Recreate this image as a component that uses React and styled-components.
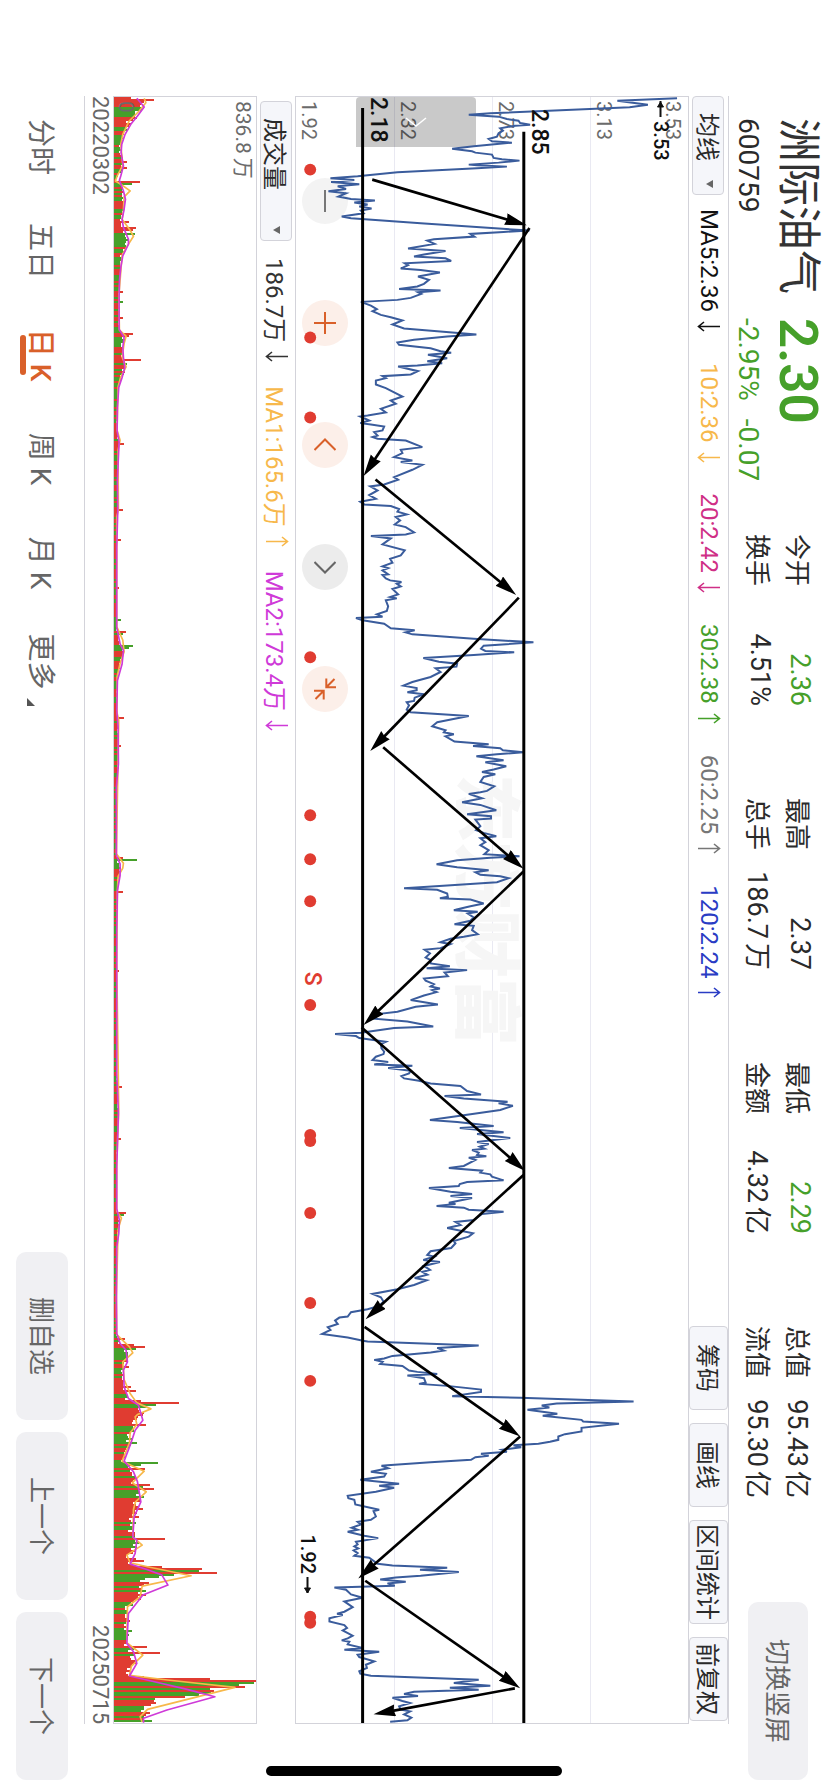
import React from 'react'
import styled, { createGlobalStyle } from 'styled-components'


const RED = '#e03c31'
const GREEN = '#46a02a'
const ORANGE = '#f7b84b'
const PURPLE = '#cf3ad8'


const GlobalStyle = createGlobalStyle`
  body {
    margin: 0;
    background: #fff;
  }

  * {
    box-sizing: border-box;
  }

  button {
    border: 0;
    padding: 0;
    background: none;
    font: inherit;
    color: inherit;
    white-space: nowrap;
  }
`

const Page = styled.div`
  width: 100vw;
  height: 100vh;
  overflow: hidden;
`

// the phone is held sideways, so the whole page is turned by a quarter
const Stage = styled.main`
  width: 100vh;
  height: 100vw;
  margin-left: 100vw;
  transform: rotate(90deg);
  transform-origin: top left;
  position: relative;
  display: flex;
  flex-direction: column;
  font-family: Roboto, 'Noto Sans CJK SC', sans-serif;
  color: #2a2a2a;
`

/* ---------- header ---------- */

const Header = styled.header`
  height: 99px;
  display: grid;
  grid-template-columns: 416px 1fr 178px;
  padding: 0 12px 0 118px;
`

const Identity = styled.div`
  display: grid;
  grid-template-columns: 200px 1fr;
  grid-template-rows: 60px 39px;
  align-items: center;
`

const Name = styled.h1`
  margin: 0;
  font-size: 44px;
  line-height: 60px;
  font-weight: 400;
  color: #333;
`

const Price = styled.strong`
  font-size: 53px;
  line-height: 60px;
  font-weight: 600;
  color: ${GREEN};
`

const Code = styled.span`
  font-size: 28px;
`

const Change = styled.span`
  display: flex;
  gap: 18px;
  font-size: 28px;
  color: ${GREEN};
`

const Stats = styled.dl`
  margin: 0;
  padding: 8px 104px 0 0;
  display: grid;
  grid-template-columns: repeat(4, 1fr);
  grid-auto-rows: 40px;
  column-gap: 92px;
`

const Stat = styled.div`
  display: flex;
  justify-content: space-between;
  align-items: center;
  font-size: 26px;
  white-space: nowrap;

  dd {
    margin: 0;
    font-size: 27px;
    color: ${p => p.$color || '#2a2a2a'};
  }
`

const Unit = styled.span`
  margin-left: 4px;
`

const GreyButton = styled.button`
  height: ${p => p.$height || '52px'};
  width: ${p => p.$width || '168px'};
  margin-top: ${p => p.$top || '0'};
  padding-bottom: 4px;
  border-radius: 10px;
  background: #f0f0f3;
  color: #666;
  font-size: 26px;
`

/* ---------- board ---------- */

const Board = styled.section`
  flex: 1;
  min-height: 0;
  margin: 0 68px 0 96px;
  display: flex;
  flex-direction: column;
`

const Toolbar = styled.div`
  height: ${p => p.$height};
  border-top: ${p => (p.$line ? '1px solid #d3d3da' : '0')};
  padding-left: ${p => p.$left || '0'};
  display: flex;
  align-items: center;
  font-size: 24px;
`

const Picker = styled.button`
  height: 32px;
  width: ${p => p.$width};
  padding: 0 6px 2px 16px;
  display: flex;
  align-items: center;
  justify-content: space-between;
  border: 1px solid #d3d3da;
  border-radius: 4px;
  background: #f5f6fa;

  &::after {
    content: '';
    border: 4px solid transparent;
    border-top: 7px solid #666;
    border-bottom: 0;
  }
`

const Averages = styled.div`
  display: flex;
  gap: ${p => p.$gap};
  margin-left: ${p => p.$left};
  padding-bottom: 2px;
`

const Average = styled.span`
  display: flex;
  align-items: center;
  gap: 9px;
  color: ${p => p.$color};
  white-space: nowrap;
`

const Tools = styled.div`
  margin-left: auto;
  padding-right: 3px;
  display: flex;
  gap: 13px;
`

const Tool = styled.button`
  height: 39px;
  min-width: 84px;
  padding: 0 3px 2px;
  border: 1px solid #d3d3da;
  border-radius: 4px;
  background: #f5f6fa;
`

const Panel = styled.div`
  flex: ${p => p.$share} 1 0;
  min-height: 0;
  position: relative;
  border: 1px solid #d3d3da;
`

const Layer = styled.svg`
  position: absolute;
  inset: 0;
  width: 100%;
  height: 100%;
`

const Watermark = styled.div`
  position: absolute;
  inset: 0;
  display: flex;
  align-items: center;
  justify-content: center;
  font-size: 68px;
  font-weight: 900;
  color: #f6f6f6;
`

const Scale = styled.div`
  position: absolute;
  inset: 0;
  display: grid;
  grid-template-rows: repeat(4, 1fr);
`

const ScaleRow = styled.div`
  display: flex;
  flex-direction: column;
  justify-content: space-between;
  padding: 3px 4px 1px;
  border-bottom: 1px solid #e9e9f2;
  font-size: 20px;
  line-height: 24px;
  color: #6b6b6b;

  &:last-child {
    border-bottom: 0;
  }

  span:only-child {
    margin-top: auto;
  }
`

const Mark = styled.span`
  position: absolute;
  left: ${p => p.$x};
  top: ${p => p.$y};
  transform: translateY(-50%);
  font-size: ${p => p.$size || '23px'};
  line-height: 24px;
  font-weight: 500;
  color: ${p => p.$color || '#111'};
  white-space: nowrap;
  display: flex;
  align-items: center;
  gap: 3px;
`

const Handle = styled.button`
  position: absolute;
  left: 0;
  top: 54%;
  width: 50px;
  height: 120px;
  border-radius: 4px 0 0 4px;
  background: rgba(0, 0, 0, 0.21);
  display: grid;
  place-items: center;
`

const Controls = styled.div`
  position: absolute;
  left: 81px;
  bottom: 6px;
  display: flex;
  gap: 76px;
`

const Round = styled.button`
  width: 46px;
  height: 46px;
  border-radius: 50%;
  display: grid;
  place-items: center;
  background: ${p => p.$bg};
  color: ${p => p.$color};
`

const VolumeScale = styled.div`
  position: absolute;
  inset: 0;
  padding: 1px 4px 0;
  display: flex;
  flex-direction: column;
  justify-content: space-between;
  font-size: 21px;
  line-height: 24px;
  color: #6b6b6b;
`

const Dates = styled.div`
  height: 29px;
  display: flex;
  justify-content: space-between;
  border-bottom: 1px solid #d3d3da;
  font-size: 22px;
  line-height: 26px;
  color: #666;
`

/* ---------- footer ---------- */

const Footer = styled.footer`
  height: 84px;
  padding: 0 12px 0 95px;
  display: flex;
  align-items: center;
`

const Tabs = styled.nav`
  display: flex;
`

const Tab = styled.button`
  width: 104px;
  height: 84px;
  padding-bottom: 2px;
  position: relative;
  font-size: 28px;
  font-weight: ${p => (p.$active ? 500 : 400)};
  color: ${p => (p.$active ? '#d9602a' : '#666')};

  &:last-child {
    width: 93px;
  }

  &::after {
    content: '';
    display: ${p => (p.$active ? 'block' : 'none')};
    position: absolute;
    left: 32px;
    bottom: 20px;
    width: 40px;
    height: 6px;
    border-radius: 3px;
    background: #d9602a;
  }
`

const Corner = styled.svg`
  position: absolute;
  right: 2px;
  bottom: 27px;
`

const Actions = styled.div`
  margin-left: auto;
  display: flex;
  gap: 12px;
`

const HomeBar = styled.div`
  position: absolute;
  right: 16px;
  top: calc(50% - 148px);
  width: 10px;
  height: 296px;
  border-radius: 5px;
  background: #000;
`

/* ---------- data ---------- */

const stats = [
  { label: '今开', value: '2.36', color: GREEN },
  { label: '最高', value: '2.37' },
  { label: '最低', value: '2.29', color: GREEN },
  { label: '总值', value: '95.43', unit: '亿' },
  { label: '换手', value: '4.51%' },
  { label: '总手', value: '186.7', unit: '万' },
  { label: '金额', value: '4.32', unit: '亿' },
  { label: '流值', value: '95.30', unit: '亿' },
]

const averages = [
  ['MA5:2.36', 'down', '#111'],
  ['10:2.36', 'down', ORANGE],
  ['20:2.42', 'down', '#cf2f86'],
  ['30:2.38', 'up', GREEN],
  ['60:2.25', 'up', '#777'],
  ['120:2.24', 'up', '#2a3cc4'],
]

const volumeAverages = [
  ['186.7万', 'down', '#333'],
  ['MA1:165.6万', 'up', ORANGE],
  ['MA2:173.4万', 'down', PURPLE],
]

// [price height, time], one block per stretch of the time axis
const blocks = [
  [0, `1043,23 863,30 955,42 900,50 780,55 480,68 415,72 505,78 530,85 565,90 570,97 600,102 555,105 510,113 518,120
    505,128 500,138 475,145 485,152 545,156 430,167 365,174 425,182 435,186 485,192 490,202 515,206 568,210 505,216
    415,222 440,224 530,228 440,233 200,245 80,257 -2,263 70,268 0,274 85,281 20,287 45,295 -8,302 45,308 22,318
    60,325 132,330 70,336 110,342 85,348 122,354 90,360 98,368 32,378 60,383 270,398 598,420 520,424 420,430 432,438
    310,446 290,450 312,460 232,474 345,481 280,492 250,498 345,503 362,511 222,518 232,524 210,534 270,538 328,546
    262,558 295,568 280,580 260,588 205,595 330,600 262,605 272,610 240,622 200,628 90,634 120,645 138,656 125,662
    150,673 180,680 215,690 185,702 220,714 320,722 438,732 350,738 250,748 200,756 205,763 300,773 330,782 362,787
    292,793 350,803 290,812 335,818 260,825 202,828 262,842 240,852 155,857 165,863 135,870 135,882 165,893 215,918
    180,930 195,940 150,955 165,966 110,975 88,978 115,990 88,998 120,1002 160,1008 155,1020 130,1025 140,1035
    125,1040 140,1045 225,1050 275,1070 210,1078 215,1088 190,1100 245,1110 210,1115 275,1123 245,1138 190,1160
    202,1168 160,1182 118,1188 140,1200 115,1214 135,1225`],
  [1230, `88,4 100,12 180,17 205,26 200,34 228,42 195,50 208,60 192,72 225,80 250,96 225,102 120,107 180,114 155,132
    222,150 210,165 178,175 185,187 155,198 172,203 155,210 172,222 155,224 165,234 178,240 212,245 198,250 210,258
    185,266 202,282 178,290 198,294 165,300 172,318 168,332 138,342 155,349 75,353 95,360 160,370 180,384 252,390
    225,396 245,402 430,415 610,426 460,436 452,445 465,452 552,456 430,464 278,473 325,484 380,490 378,499 315,504
    330,515 300,530 245,545 218,556 258,563 258,570 230,576 280,582 252,592 250,602 228,606 235,615 228,628 240,636
    415,647 365,657 320,666 305,678 345,690 340,696 370,702 345,708 372,724 475,732 428,737 510,744 518,750 580,756
    500,762 438,768 520,780 465,786 528,798 490,808 455,815 495,822 460,830 450,845 492,858 470,872 450,876 415,881
    455,894 395,906 450,914 498,930 410,942 482,948 482,955 435,958 450,978 437,990 460,998 498,1008 450,1014
    465,1026 450,1035 475,1050 462,1062 568,1068 480,1073 380,1080 318,1092 380,1101 475,1110 435,1116 450,1124
    510,1128 535,1134 500,1146 350,1156 220,1164 320,1169 350,1180 352,1190 328,1194 420,1198 460,1210 420,1218
    375,1229`],
  [2460, `370,0 442,5 412,10 430,22 420,32 372,42 430,47 425,60 442,72 400,80 360,86 330,96 360,102 330,114 282,119
    298,130 285,142 300,150 300,160 358,168 288,174 410,180 342,187 352,198 280,205 285,212 310,222 300,229 328,235
    305,240 318,246 280,256 240,270 322,283 255,290 200,305 140,312 130,326 230,334 308,349 190,354 90,368 12,372
    75,378 85,384 165,395 150,402 152,415 160,425 158,432 135,440 125,450 172,456 130,463 245,467 172,474 240,482
    235,490 212,498 220,505 265,512 300,520 390,528 410,543 452,553 342,558 400,565 532,575 505,580 548,587 510,600
    410,614 298,630 380,636 490,648 388,654 520,667 440,672 540,684 440,696 475,702 448,710 462,716 425,720 445,728
    440,735 468,739 415,743 435,750 400,768 355,774 455,782 450,788 480,793 485,800 520,811 410,816 388,822 385,828
    295,834 360,845 425,852 360,858 425,864 355,878 375,882 318,888 400,893 415,899 520,905 455,912 430,930 375,936
    390,945 350,954 428,970 415,980 370,993 375,1000 362,1014 300,1024 290,1035 310,1040 278,1050 328,1056 280,1068
    298,1080 275,1086 290,1094 252,1104 288,1111 250,1125 200,1138 125,1152 150,1162 158,1175 145,1188 110,1198
    60,1207 50,1220 25,1223 12,1232 20,1242 -10,1252 -2,1260 -27,1272 50,1283 100,1293`],
  [3690, `110,65 445,77 320,84 340,92 300,98 185,108 160,116 130,120 155,126 148,132 215,138 235,152 260,156 320,162
    230,167 280,175 285,188 265,192 350,198 452,209 452,216 365,229 570,234 912,245 680,251 635,257 658,263 592,270
    682,282 638,288 755,300 760,305 868,312 755,324 755,335 705,343 685,350 685,360 660,366 625,372 550,376 573,382
    515,390 530,396 452,402 475,408 435,412 422,420 300,427 170,436 152,438 172,445 120,456 165,462 160,470 88,480
    205,492 145,498 190,504 135,516 50,528 52,535 70,540 73,554 145,570 128,574 135,590 120,600 80,606 90,614 62,624
    80,630 50,636 100,648 142,655 75,666 80,674 70,680 82,686 68,692 80,700 70,708 115,714 140,732 185,737 350,744
    268,750 385,757 270,768 195,773 148,779 225,786 170,791 192,798 10,803 45,810 60,824 95,834 40,845 65,862 40,876
    18,882 35,886 -5,896 -5,905 40,916 48,925 35,932 65,948 50,956 32,962 55,966 50,974 95,985 40,990 145,996 80,1005
    85,1012 130,1025 105,1035 108,1045 85,1055 88,1062 120,1068 445,1080 370,1090 480,1098 358,1104 445,1110 250,1116
    220,1123 262,1129 185,1134 215,1144 238,1150 205,1160 210,1170 238,1175 220,1184 242,1194 230,1202 178,1206`],
]

const toX = t => t - 19
const toY = p => 1076 - p

const priceLine = blocks
  .flatMap(([start, text]) => text.trim().split(/\s+/).map(pair => {
    const [p, t] = pair.split(',').map(Number)
    return `${toX(t + start)},${toY(p)}`
  }))
  .join(' ')

// from price, from time, to price, to time
const arrows = [
  [124, 267, 590, 404], [598, 412, 98, 1157], [134, 1167, 558, 1514], [566, 1522, 118, 1982],
  [157, 1971, 580, 2336], [580, 2344, 98, 2805], [92, 2812, 585, 3243], [580, 3255, 104, 3688],
  [101, 3711, 570, 4040], [570, 4040, 82, 4466], [103, 4473, 570, 4796], [554, 4796, 128, 4874],
]

const dots = [237, 741, 981, 1701, 2175, 2307, 2433, 2745, 3135, 3153, 3369, 3639, 3873, 4581, 4599]

const ma1 = [
  [4, 90], [17, 95], [42, 75], [72, 45], [112, 26], [142, 20], [205, 26], [235, 10], [252, 4], [262, 20], [282, 48],
  [300, 30], [340, 28], [367, 24], [400, 48], [418, 58], [450, 38], [475, 24], [600, 14], [700, 16], [718, 36],
  [740, 30], [780, 24], [810, 36], [840, 20], [870, 12], [1000, 9], [1030, 18], [1060, 12], [1240, 13], [1260, 8],
  [1590, 8], [1630, 26], [1665, 30], [1700, 18], [1740, 9], [1850, 9], [1870, 14], [2272, 7], [2300, 28], [2315, 26],
  [2340, 12], [2382, 10], [2600, 8], [3040, 14], [3200, 8], [3345, 8], [3365, 22], [3400, 12], [3600, 7], [3715, 8],
  [3752, 46], [3770, 56], [3797, 26], [3850, 30], [3892, 48], [3920, 68], [3938, 110], [3955, 70], [3962, 63],
  [3985, 68], [4010, 48], [4040, 46], [4095, 24], [4125, 90], [4160, 54], [4187, 96], [4217, 64], [4240, 58],
  [4322, 56], [4347, 84], [4377, 38], [4400, 48], [4412, 100], [4439, 230], [4470, 84], [4502, 78], [4532, 40],
  [4640, 38], [4677, 86], [4710, 52], [4738, 46], [4752, 160], [4774, 361], [4840, 100], [4862, 78], [4878, 84],
]

const ma2 = [
  [4, 68], [30, 90], [57, 70], [82, 50], [112, 33], [142, 23], [167, 21], [207, 28], [237, 20], [250, 16], [282, 28],
  [307, 34], [337, 30], [367, 24], [392, 28], [427, 43], [442, 43], [477, 26], [512, 20], [552, 16], [602, 15],
  [697, 15], [722, 30], [752, 26], [782, 28], [812, 32], [842, 24], [872, 14], [932, 10], [1002, 9], [1037, 15],
  [1102, 12], [1152, 10], [1242, 11], [1352, 8], [1452, 8], [1592, 8], [1642, 18], [1662, 28], [1702, 24], [1752, 10],
  [1842, 8], [1892, 12], [2002, 13], [2072, 7], [2277, 7], [2302, 18], [2337, 18], [2382, 10], [2500, 8], [2752, 8],
  [2932, 8], [3052, 13], [3212, 8], [3337, 8], [3372, 16], [3412, 14], [3452, 8], [3612, 7], [3712, 8], [3742, 18],
  [3762, 36], [3797, 40], [3822, 28], [3872, 30], [3907, 43], [3927, 73], [3972, 86], [4002, 63], [4042, 50],
  [4095, 30], [4127, 58], [4157, 70], [4217, 80], [4262, 60], [4322, 56], [4332, 68], [4372, 63], [4404, 48],
  [4420, 98], [4437, 143], [4467, 161], [4497, 86], [4552, 43], [4642, 38], [4667, 58], [4702, 68], [4740, 46],
  [4754, 108], [4780, 218], [4802, 301], [4842, 158], [4867, 88], [4880, 88],
]

// days that stand out: time, height, up or down
const peaks = [
  [6, 120, 1], [12, 90, 1], [192, 38, 1], [210, 38, 1], [252, 78, 1], [258, 53, 0], [372, 46, 1], [390, 65, 1],
  [396, 58, 1], [408, 62, 0], [582, 28, 1], [614, 26, 0], [660, 26, 1], [708, 58, 1], [714, 46, 1], [786, 80, 1],
  [800, 38, 0], [1036, 30, 1], [1238, 26, 1], [1328, 22, 1], [1472, 16, 1], [1568, 20, 0], [1604, 36, 1],
  [1610, 28, 0], [1646, 56, 0], [1652, 46, 0], [1863, 30, 1], [1947, 20, 1], [2282, 28, 1], [2288, 68, 0],
  [2384, 26, 1], [2624, 14, 1], [2972, 24, 1], [3128, 20, 1], [3350, 36, 1], [3356, 30, 0], [3726, 32, 1],
  [3746, 60, 1], [3752, 91, 1], [3758, 65, 0], [3812, 46, 1], [3870, 50, 1], [3885, 66, 1], [3914, 80, 1],
  [3920, 195, 1], [3926, 125, 0], [3932, 95, 0], [3987, 95, 1], [4040, 68, 0], [4100, 131, 0], [4106, 80, 0],
  [4114, 92, 1], [4166, 108, 1], [4172, 85, 0], [4178, 119, 1], [4238, 85, 1], [4262, 75, 1], [4328, 153, 1],
  [4388, 66, 1], [4394, 88, 1], [4410, 143, 1], [4416, 263, 1], [4422, 255, 0], [4428, 308, 1], [4434, 178, 0],
  [4440, 135, 0], [4446, 93, 0], [4452, 78, 0], [4458, 105, 1], [4464, 90, 1], [4480, 96, 0], [4494, 95, 1],
  [4604, 55, 0], [4652, 98, 1], [4658, 60, 0], [4670, 136, 1], [4676, 60, 0], [4740, 90, 1], [4746, 288, 1],
  [4752, 424, 1], [4758, 417, 0], [4764, 372, 0], [4770, 391, 1], [4776, 286, 0], [4782, 298, 1], [4788, 290, 0],
  [4794, 255, 0], [4800, 212, 1], [4806, 123, 0], [4812, 118, 1], [4818, 125, 1], [4824, 110, 1], [4830, 88, 0],
  [4836, 90, 0], [4842, 80, 0], [4848, 108, 1], [4854, 95, 1], [4860, 88, 0], [4866, 88, 1], [4872, 113, 0],
]

// long stretches of one colour: from, to, up or down
const stretches = [
  [0, 27, 1], [27, 57, 0], [57, 87, 1], [87, 99, 0], [99, 112, 1], [112, 132, 0], [414, 446, 0], [720, 742, 0],
  [1612, 1640, 1], [1660, 1676, 1], [1676, 1692, 0], [1692, 1712, 1], [2290, 2306, 0], [2352, 2376, 0],
  [3762, 3792, 0], [3842, 3892, 1], [3892, 3904, 0], [3904, 3925, 1], [3942, 3985, 1], [3987, 4000, 0],
  [4010, 4036, 0], [4090, 4112, 0], [4180, 4204, 0], [4204, 4248, 1], [4332, 4352, 0], [4377, 4412, 1],
  [4484, 4514, 1], [4560, 4574, 1], [4606, 4632, 0], [4632, 4650, 1], [4684, 4700, 1], [4712, 4736, 1],
]

const valueAt = (line, t) => {
  const i = line.findIndex(([x]) => x >= t)
  if (i <= 0) return i === 0 ? line[0][1] : line[line.length - 1][1]
  const [x0, y0] = line[i - 1]
  const [x1, y1] = line[i]
  return y0 + ((y1 - y0) * (t - x0)) / (x1 - x0)
}

const noise = n => {
  const v = Math.sin(n * 12.9898) * 43758.5453
  return v - Math.floor(v)
}

const volumeBars = up => {
  let d = ''
  for (let i = 0; i < 813; i++) {
    const t = i * 6
    const peak = peaks.find(([x]) => x > t - 3 && x <= t + 3)
    const run = stretches.find(([a, b]) => t >= a && t < b)
    const base = Math.min(valueAt(ma1, t), valueAt(ma2, t))
    const height = peak ? peak[1] : Math.round(base * (0.75 + noise(i) * 0.45))
    const rising = peak ? peak[2] : run ? run[2] : noise(i + 5000) > 0.45 ? 1 : 0
    if (rising === up) d += `M${t} 424V${424 - height}h6V424z`
  }
  return d
}

const volumeLine = line => line.map(([t, h]) => `${t},${424 - h}`).join(' ')

/* ---------- drawings ---------- */

const Trend = ({ dir }) => (
  <svg width="11" height="24" viewBox="0 0 11 24" fill="none" stroke="currentColor" strokeWidth="1.6"
    role="img" aria-label={dir}>
    <path d={dir === 'up' ? 'M5.5 23V1.5M1 7L5.5 1.5L10 7' : 'M5.5 1V22.5M1 17L5.5 22.5L10 17'} />
  </svg>
)

const Pointer = ({ left }) => (
  <svg width="17" height="9" viewBox="0 0 17 9" fill="none" stroke="currentColor" strokeWidth="2" aria-hidden="true">
    <path d="M0 4.5H16" />
    <path d={left ? 'M6 1.5L1 4.5L6 7.5z' : 'M11 1.5L16 4.5L11 7.5z'} fill="currentColor" strokeWidth="1" />
  </svg>
)

const icons = {
  minus: 'M0 11H22',
  plus: 'M0 11H22M11 0V22',
  left: 'M16 0.5L5.5 11L16 21.5',
  right: 'M6 0.5L16.5 11L6 21.5',
  shrink: 'M0.5 9.7H9.3V0M1 1.5L9.3 9.7M21.5 12.3H12.7V22M21 20.5L12.7 12.3',
}

const controls = [
  ['缩小', 'minus', '#f3f3f3', '#777'],
  ['放大', 'plus', '#fcefe9', '#d9602a'],
  ['左移', 'left', '#fcefe9', '#d9602a'],
  ['右移', 'right', '#ececec', '#666'],
  ['收起', 'shrink', '#fcefe9', '#d9602a'],
]

const PriceChart = () => (
  <Panel $share={395}>
    <Scale>
      <ScaleRow><span>3.53</span><span>3.13</span></ScaleRow>
      <ScaleRow><span>2.73</span></ScaleRow>
      <ScaleRow><span>2.32</span></ScaleRow>
      <ScaleRow><span>1.92</span></ScaleRow>
    </Scale>
    <Watermark aria-hidden="true">东方财富</Watermark>
    <Handle aria-label="展开">
      <svg width="10" height="22" viewBox="0 0 10 22" fill="none" stroke="#fff" strokeWidth="1.5">
        <path d="M1 1L9 11L1 21" />
      </svg>
    </Handle>
    <Controls>
      {controls.map(([label, icon, bg, color]) => (
        <Round key={icon} aria-label={label} $bg={bg} $color={color}>
          <svg width="22" height="22" viewBox="0 0 22 22" fill="none" stroke="currentColor" strokeWidth="2">
            <path d={icons[icon]} />
          </svg>
        </Round>
      ))}
    </Controls>
    <Layer viewBox="0 0 4881 1182" preserveAspectRatio="none" fill="none" pointerEvents="none">
      <defs>
        <marker id="head" markerUnits="userSpaceOnUse" markerWidth="70" markerHeight="40" refX="66" refY="18"
          orient="auto" viewBox="0 0 70 40">
          <path d="M0 0L66 18L0 36L4 18z" fill="#000" />
        </marker>
      </defs>
      {dots.map(t => <circle key={t} cx={toX(t)} cy={toY(-63)} r="18" fill={RED} />)}
      <polyline points={priceLine} stroke="#3a5c9c" strokeWidth="6" />
      <path d={`M${toX(52)} ${toY(95)}H4881M${toX(123)} ${toY(581)}H4881`} stroke="#000" strokeWidth="9" />
      {arrows.map(([p1, t1, p2, t2]) => {
        // the shaft stops short so that the head keeps its point
        const length = Math.hypot(p2 - p1, t2 - t1)
        const k = 50 / length
        return (
          <g key={t1 + '-' + t2} stroke="#000" strokeWidth="8">
            <path d={`M${toX(t1)} ${toY(p1)}L${toX(t2 - (t2 - t1) * k)} ${toY(p2 - (p2 - p1) * k)}`} />
            <path d={`M${toX(t1)} ${toY(p1)}L${toX(t2)} ${toY(p2)}`} stroke="none" markerEnd="url(#head)" />
          </g>
        )
      })}
    </Layer>
    <Mark $x="4px" $y="7%" $size="20px"><Pointer left />3.53</Mark>
    <Mark $x="12px" $y="38%">2.85</Mark>
    <Mark $x="0" $y="79%">2.18</Mark>
    <Mark $x="53.8%" $y="96%" $color={RED}>S</Mark>
    <Mark $x="88.4%" $y="97%" $size="20px">1.92<Pointer /></Mark>
  </Panel>
)

const VolumeChart = () => (
  <Panel $share={143}>
    <Layer viewBox="0 0 4881 424" preserveAspectRatio="none" fill="none">
      <g shapeRendering="crispEdges">
        <path d={volumeBars(1)} fill={RED} />
        <path d={volumeBars(0)} fill={GREEN} />
      </g>
      <polyline points={volumeLine(ma1)} stroke={ORANGE} strokeWidth="5" strokeLinejoin="round" />
      <polyline points={volumeLine(ma2)} stroke={PURPLE} strokeWidth="5" strokeLinejoin="round" />
    </Layer>
    <VolumeScale><span>836.8<Unit>万</Unit></span><span>0</span></VolumeScale>
  </Panel>
)

const AverageList = ({ items, gap, left }) => (
  <Averages $gap={gap} $left={left}>
    {items.map(([text, dir, color]) => (
      <Average key={text} $color={color}>{text}<Trend dir={dir} /></Average>
    ))}
  </Averages>
)


const App = () => {
  return (
    <Page>
      <GlobalStyle />
      <Stage>

        <Header>
          <Identity>
            <Name>洲际油气</Name>
            <Price>2.30</Price>
            <Code>600759</Code>
            <Change><span>-2.95%</span><span>-0.07</span></Change>
          </Identity>
          <Stats>
            {stats.map(({ label, value, unit, color }) => (
              <Stat key={label} $color={color}>
                <dt>{label}</dt>
                <dd>{value}{unit && <Unit>{unit}</Unit>}</dd>
              </Stat>
            ))}
          </Stats>
          <GreyButton $height="60px" $width="178px" $top="20px">切换竖屏</GreyButton>
        </Header>

        <Board>
          <Toolbar $height="40px" $line>
            <Picker $width="99px">均线</Picker>
            <AverageList items={averages} gap="31px" left="14px" />
            <Tools>
              <Tool>筹码</Tool>
              <Tool>画线</Tool>
              <Tool>区间统计</Tool>
              <Tool>前复权</Tool>
            </Tools>
          </Toolbar>
          <PriceChart />
          <Toolbar $height="38px" $left="5px">
            <Picker $width="140px">成交量</Picker>
            <AverageList items={volumeAverages} gap="24px" left="17px" />
          </Toolbar>
          <VolumeChart />
          <Dates><span>20220302</span><span>20250715</span></Dates>
        </Board>

        <Footer>
          <Tabs>
            <Tab>分时</Tab>
            <Tab>五日</Tab>
            <Tab $active>日 K</Tab>
            <Tab>周 K</Tab>
            <Tab>月 K</Tab>
            <Tab>
              更多
              <Corner width="8" height="8" viewBox="0 0 8 8"><path d="M8 0V8H0z" fill="#555" /></Corner>
            </Tab>
          </Tabs>
          <Actions>
            <GreyButton>删自选</GreyButton>
            <GreyButton>上一个</GreyButton>
            <GreyButton>下一个</GreyButton>
          </Actions>
        </Footer>

        <HomeBar />
      </Stage>
    </Page>
  )
}


export default App
